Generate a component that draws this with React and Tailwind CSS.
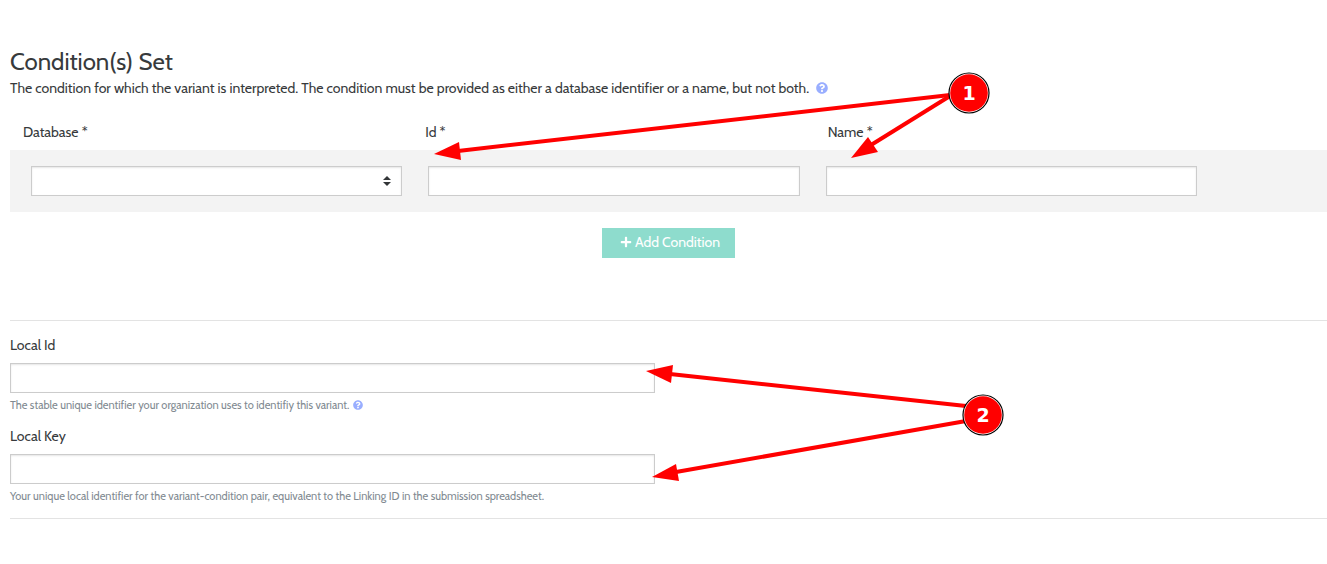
import { FaPlus, FaQuestionCircle } from 'react-icons/fa';

const inputClass =
  'block h-[30px] w-full appearance-none rounded-none border border-[#cccccc] bg-white px-2 text-sm shadow-[inset_0_1px_2px_rgba(0,0,0,0.1)] outline-none';

const conditionFields = [
  { id: 'database', label: 'Database *', type: 'select' },
  { id: 'condition-id', label: 'Id *', type: 'text' },
  { id: 'condition-name', label: 'Name *', type: 'text' },
];

const arrows = [
  { line: [950, 95, 458, 151], head: '434,154 459,142 461,160' },
  { line: [950, 96, 871, 145], head: '851,158 868,137 878,152' },
  { line: [966, 406, 670, 374], head: '646,371 673,365 671,383' },
  { line: [966, 421, 676, 472], head: '652,477 676,464 679,481' },
];

const markers = [
  { x: 969, y: 93, label: '1' },
  { x: 983, y: 415, label: '2' },
];

export default function App() {
  return (
    <div className="relative min-h-screen overflow-x-hidden bg-white font-[Cabin,Lato,sans-serif] text-[#373a3c]">
      <main className="pl-[10px] pt-[46px]">
        <h1 className="text-2xl leading-8">Condition(s) Set</h1>
        <p className="flex items-center gap-[7px] text-sm leading-5">
          The condition for which the variant is interpreted. The condition must be provided as either a database
          identifier or a name, but not both.
          <HelpButton className="h-3 w-3" />
        </p>

        <div className="mt-6 grid grid-cols-3 pl-[13px] pr-[97px] text-sm leading-5">
          {conditionFields.map((field) => (
            <label key={field.id} htmlFor={field.id}>{field.label}</label>
          ))}
        </div>
        <div className="mt-2 grid grid-cols-3 gap-[26px] bg-[#f3f3f3] py-4 pl-[21px] pr-[130px]">
          {conditionFields.map((field) =>
            field.type === 'select' ? (
              <div key={field.id} className="relative">
                <select id={field.id} className={inputClass} />
                <svg viewBox="0 0 8 10" className="pointer-events-none absolute right-[11px] top-[10px] h-[10px] w-2" fill="#333638">
                  <path d="M4 0L8 4H0zM4 10L0 6h8z" />
                </svg>
              </div>
            ) : (
              <input key={field.id} id={field.id} type="text" className={inputClass} />
            )
          )}
        </div>

        <div className="mt-4 flex justify-center">
          <button type="button" className="flex h-[30px] items-center gap-[3px] bg-[#8edccd] pb-[2px] pl-[18px] pr-[15px] text-sm text-white">
            <FaPlus className="h-3 w-3" />
            Add Condition
          </button>
        </div>

        <section className="mt-[62px] border-y border-[#e3e3e3] pb-[13px] pt-[14px]">
          <LocalField id="local-id" label="Local Id" hint="The stable unique identifier your organization uses to identifiy this variant." help />
          <div className="mt-3">
            <LocalField id="local-key" label="Local Key" hint="Your unique local identifier for the variant-condition pair, equivalent to the Linking ID in the submission spreadsheet." />
          </div>
        </section>
      </main>

      <Annotations />
    </div>
  );
}

function HelpButton({ className }) {
  return (
    <button type="button" aria-label="Help" className="text-[#99aeff]">
      <FaQuestionCircle className={className} />
    </button>
  );
}

function LocalField({ id, label, hint, help }) {
  return (
    <div>
      <label htmlFor={id} className="block text-sm leading-5">{label}</label>
      <input id={id} type="text" className={`${inputClass} mt-2 max-w-[645px]`} />
      <p className="mt-[3px] flex items-center gap-1 text-[11px] leading-[18px] text-[#818a91]">
        {hint}
        {help && <HelpButton className="h-[10px] w-[10px]" />}
      </p>
    </div>
  );
}

function Annotations() {
  return (
    <svg className="pointer-events-none absolute left-0 top-0" width="1010" height="500">
      {arrows.map(({ line, head }) => (
        <g key={head} fill="#ff0000">
          <line x1={line[0]} y1={line[1]} x2={line[2]} y2={line[3]} stroke="#ff0000" strokeWidth="4" />
          <polygon points={head} />
        </g>
      ))}
      {markers.map(({ x, y, label }) => (
        <g key={label}>
          <circle cx={x} cy={y} r="20" fill="#fff" stroke="#000" strokeWidth="1.2" />
          <circle cx={x} cy={y} r="18.8" fill="#ff0000" />
          <text x={x} y={y + 7} textAnchor="middle" fill="#fff" className="font-['DejaVu_Sans',sans-serif] text-[19px] font-bold">
            {label}
          </text>
        </g>
      ))}
    </svg>
  );
}
